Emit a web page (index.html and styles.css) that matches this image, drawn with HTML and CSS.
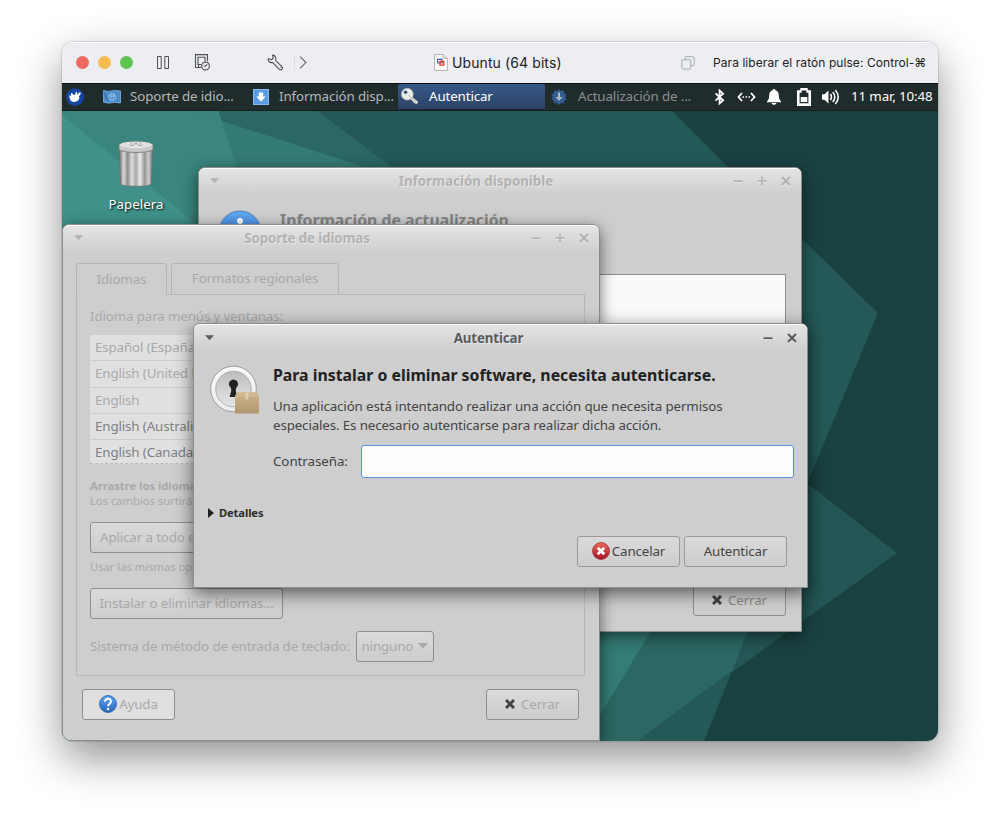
FILE: index.html
```html
<!DOCTYPE html>
<html lang="es">
<head>
<meta charset="utf-8">
<title>Ubuntu (64 bits)</title>
<link rel="stylesheet" href="styles.css">
</head>
<body>
<svg class="defs" width="0" height="0" aria-hidden="true">
  <defs>
    <linearGradient id="blue" x2="0" y2="1"><stop offset="0" stop-color="#62aaf4"/><stop offset="1" stop-color="#2764b8"/></linearGradient>
    <linearGradient id="red" x2="0" y2="1"><stop offset="0" stop-color="#ec6a5c"/><stop offset="1" stop-color="#a31325"/></linearGradient>
    <linearGradient id="metal"><stop offset="0" stop-color="#777"/><stop offset=".13" stop-color="#d8d8d8"/><stop offset=".25" stop-color="#8c8c8e"/><stop offset=".37" stop-color="#ddd"/><stop offset=".5" stop-color="#a8a8aa"/><stop offset=".62" stop-color="#ececec"/><stop offset=".76" stop-color="#98989a"/><stop offset=".88" stop-color="#ccc"/><stop offset="1" stop-color="#777"/></linearGradient>
    <linearGradient id="ring" x2="0" y2="1"><stop offset="0" stop-color="#fafafa"/><stop offset="1" stop-color="#ececec"/></linearGradient>
    <linearGradient id="face" x2="0" y2="1"><stop offset="0" stop-color="#bdbdbf"/><stop offset="1" stop-color="#e6e6e6"/></linearGradient>
    <linearGradient id="box" x2="0" y2="1"><stop offset="0" stop-color="#cdb48b"/><stop offset="1" stop-color="#af9871"/></linearGradient>
    <symbol id="menu-arrow" viewBox="0 0 10 6"><path d="M0 0h10L5 5.500z" fill="currentColor"/></symbol>
    <symbol id="w-min" viewBox="0 0 10 10"><path d="M.5 5.200h9" stroke="currentColor" stroke-width="1.800"/></symbol>
    <symbol id="w-max" viewBox="0 0 10 10"><path d="M.3 5h9.400M5 .5v9" stroke="currentColor" stroke-width="1.700"/></symbol>
    <symbol id="w-close" viewBox="0 0 10 10"><path d="M1 1l8 8M9 1L1 9" stroke="currentColor" stroke-width="2.200"/></symbol>
    <symbol id="b-close" viewBox="0 0 10 10"><path d="M1 1l8 8M9 1L1 9" stroke="#444" stroke-width="3"/></symbol>
  </defs>
</svg>
<main class="vm">
  <header class="mac-bar">
    <i class="light light-red"></i><i class="light light-yellow"></i><i class="light light-green"></i>
    <svg class="i-pause" width="14" height="15" viewBox="0 0 14 15" fill="none" stroke="#4d4f53"><path d="M1.500 1.500h3.700v12H1.500zM8.800 1.500h3.700v12H8.800z"/></svg>
    <svg class="i-snap" width="17" height="17" viewBox="0 0 17 17" fill="none" stroke="#4d4f53" stroke-width="1.100"><path d="M7 13.500H1.500V.600h12V7M4.500 13.500V11M7 10.500H4V3.200h7V7"/><circle cx="11.500" cy="12" r="3.900"/><path d="M11.500 12l1.800-1.600M11.500 12H9.500"/></svg>
    <svg class="i-wrench" width="17" height="17" viewBox="0 0 17 17" fill="none" stroke="#4d4f53" stroke-width="1.100"><path d="M5.600 1.200l.600 3-1.600 1.500L1.300 4.800C.700 7 3 9.200 5.700 8.500l6.600 6.900c1.800 1.500 4.200-.800 2.600-2.700L8.700 6.600C9.600 3.500 7.800.900 5.600 1.200zM12.900 13.500h.600"/></svg>
    <i class="rule"></i>
    <svg class="i-chev" width="8" height="13" viewBox="0 0 8 13" fill="none" stroke="#66686c" stroke-width="1.100"><path d="M1 .700l6 5.800-6 5.800"/></svg>
    <div class="mac-title">
      <svg width="14" height="17" viewBox="0 0 14 17"><path d="M.600.500h8.600l4.200 4v12H.600z" fill="#fafafa" stroke="#b3b3b3"/><path d="M9 .500v4h4.400" fill="#ddd" stroke="#aaa" stroke-width=".700"/><path d="M3.600 5.400h4.400v3.600H3.600z" fill="none" stroke="#3c5da8" stroke-width="1.100"/><path d="M6 7.500h3.800v3.600H6z" fill="none" stroke="#e4382b" stroke-width="1.300"/></svg>
      <span>Ubuntu (64 bits)</span>
    </div>
    <svg class="i-copy" width="14" height="14" viewBox="0 0 14 14" fill="none" stroke="#a6a8ac"><rect x=".800" y="3.700" width="9" height="9.300" rx="1.300"/><path d="M4 3.500V1.800C4 1 4.300.700 5 .700h6.800c1 0 1.400.400 1.400 1.300v6.400c0 .900-.300 1.300-1.200 1.300h-2"/></svg>
    <span class="mac-hint">Para liberar el ratón pulse: Control-⌘</span>
  </header>

  <nav class="panel">
    <svg class="mouse" width="18" height="18" viewBox="0 0 18 18"><circle cx="9" cy="9" r="8.800" fill="#1546a6"/><path d="M3 7.500l2.200.3-.5-2.800 1.500.3L7.800 7l1.200-.3 1-3 1 .3.300 2.500 2.500-2.200 1.200.500-1.200 2.700-.8.800c1 2.500-.5 4.700-3 5.300-3 .8-5.300-.200-5.800-1.800z" fill="#fff"/></svg>
    <div class="task task-lang">
      <svg width="18" height="15" viewBox="0 0 18 15"><path d="M.500 1.500l5 1 6-1 6 .400v12l-6-.500-6 .800-5-1z" fill="#4b8cca" stroke="#7cb5e4" stroke-width=".800"/><path d="M9 4.500a3.700 3.500 0 1 0 .100 0zM5.500 7h7M8 5v6M10.500 5v6" fill="none" stroke="#a5cbec" stroke-opacity=".7"/><path d="M1 3l4 9" stroke="#2c649d"/></svg>
      <span>Soporte de idio...</span>
    </div>
    <div class="task task-info">
      <svg width="16" height="16" viewBox="0 0 16 16"><rect x=".500" y=".500" width="15" height="15" fill="#5c9de2" stroke="#86b9ee"/><path d="M5.800 3.500h4.400V7.500h2.500L8 12.700 3.300 7.500h2.500z" fill="#fff"/></svg>
      <span>Información disp...</span>
    </div>
    <div class="task task-auth active">
      <svg width="18" height="17" viewBox="0 0 18 17"><path d="M9.500 9.300l6.800 5.900" stroke="#deded8" stroke-width="3"/><path d="M12.500 14.500l2-2" stroke="#d8d8d2" stroke-width="2.500"/><circle cx="6.300" cy="6.200" r="5.900" fill="#ebebe6" stroke="#b8b8b0" stroke-width=".700"/><circle cx="4.600" cy="4.300" r="1.800" fill="#35537d"/><path d="M7 7l8 7" stroke="#b5b5ad" stroke-width=".800"/></svg>
      <span>Autenticar</span>
    </div>
    <div class="task task-update">
      <svg width="16" height="16" viewBox="0 0 16 16"><path d="M8 0l1.800 2.100L12.700 1.500l.400 2.800 2.600 1.100L14.200 8l1.500 2.600-2.600 1.100-.400 2.800-2.900-.600L8 16l-1.800-2.100-2.900.600-.400-2.800-2.600-1.100L1.800 8 .300 5.400l2.600-1.100.400-2.800 2.900.600z" fill="#315d91"/><path d="M7 3.500h2V8h2.500L8 12 4.500 8H7z" fill="#aebac1"/></svg>
      <span>Actualización de ...</span>
    </div>
    <div class="tray">
      <svg width="12" height="16" viewBox="0 0 12 16" fill="none" stroke="#fff" stroke-width="1.800"><path d="M1.500 4.300l7.600 7-3.500 3.200V1.500l3.500 3.200-7.600 7"/></svg>
      <svg width="19" height="10" viewBox="0 0 19 10" fill="none" stroke="#fff" stroke-width="1.800"><path d="M5 1L1.500 5 5 9M14 1l3.500 4L14 9"/><path d="M5.500 5h8" stroke-dasharray="1.500 1.500" stroke-width="1.500"/></svg>
      <svg width="14" height="16" viewBox="0 0 14 16" fill="#fff"><path d="M7 0c1 0 1.300.600 1.400 1.300C11 2 11.800 4.100 11.900 7c.100 3 .800 4.200 2.100 5.300v.900H0v-.900C1.300 11.200 2 10 2.100 7 2.200 4.100 3 2 5.600 1.300 5.700.600 6 0 7 0zM4.500 14h5c-.500 2.400-4.500 2.400-5 0z"/></svg>
      <svg class="battery" width="14" height="18" viewBox="0 0 14 18"><path d="M3.300 0h7.400v2.300H14V18H0V2.300h3.300z" fill="#fff"/><path d="M4.600 2.500h4.800v2.300h2v10.400h-8.800V4.800h2z" fill="#202929"/><path d="M3.700 9h6.600v5H3.700z" fill="#fff"/></svg>
      <svg width="18" height="16" viewBox="0 0 18 16"><path d="M0 5.300h2.500L6.500 1.500v13l-4-3.700H0z" fill="#fff"/><path d="M8.500 5q2 3 0 6M10.800 3q4 5 0 10M13.300 1q6 7 0 14" fill="none" stroke="#fff" stroke-width="1.500"/></svg>
    </div>
    <span class="clock">11 mar, 10:48</span>
  </nav>

  <section class="desktop">
    <svg class="wallpaper" viewBox="62 111 876 630" preserveAspectRatio="none">
      <rect x="62" y="110" width="876" height="631" fill="#1a4142"/>
      <path d="M62 110H671L727 166 878 313 808 482 704 741H62z" fill="#245957"/>
      <path d="M62 110H316L390 166 640 360V741H62z" fill="#2b6863"/>
      <path d="M62 110H188L361 166 700 280V550L585 741H62z" fill="#347b74"/>
      <path d="M62 110H218L300 360V741H62z" fill="#3a857e"/>
      <path d="M188 110H218L221 121z" fill="#3a857e"/>
      <path d="M62 115L210 235H62z" fill="#3f9189"/>
      <path d="M808 484L897 553 637 741H600V484z" fill="#235654"/>
      <path d="M600 600H760L732 671 637 741H560z" fill="#2b6863"/>
      <path d="M600 600H670L600 715z" fill="#347c75"/>
    </svg>

    <figure class="trash">
      <svg width="36" height="48" viewBox="0 0 36 48"><path d="M1.500 8h33l-1 36c-1 3-30 3-31 0z" fill="url(#metal)" stroke="#6d6d6d" stroke-width=".800"/><path d="M1 4.500C4 .500 32 .500 35 4.500v5c-4 4-30 4-34 0z" fill="#c9c9cb" stroke="#777" stroke-width=".800"/><ellipse cx="18" cy="4.900" rx="16" ry="3.500" fill="#e1e1e1"/><path d="M12.500 5.500L14 1.800h8l1.500 3.700h-3l-.500-1.800h-4l-.500 1.800z" fill="#eee" stroke="#888" stroke-width=".700"/></svg>
      <figcaption>Papelera</figcaption>
    </figure>

    <article class="win win-info">
      <div class="bar"><svg class="menu"><use href="#menu-arrow"/></svg><b>Información disponible</b><div class="ctl"><svg><use href="#w-min"/></svg><svg><use href="#w-max"/></svg><svg><use href="#w-close"/></svg></div></div>
      <div class="info-head">
        <svg width="44" height="44" viewBox="0 0 44 44"><circle cx="22" cy="22" r="21" fill="url(#blue)" stroke="#4a7fc0"/><circle cx="22" cy="11" r="3" fill="#fff"/><path d="M18 17h6v17h-4V20h-2z" fill="#fff"/></svg>
        <h2>Información de actualización</h2>
      </div>
      <div class="info-box"></div>
      <div class="info-foot"><button class="btn dim-2"><svg class="x"><use href="#b-close"/></svg>Cerrar</button></div>
    </article>

    <article class="win win-lang">
      <div class="bar"><svg class="menu"><use href="#menu-arrow"/></svg><b>Soporte de idiomas</b><div class="ctl"><svg><use href="#w-min"/></svg><svg><use href="#w-max"/></svg><svg><use href="#w-close"/></svg></div></div>
      <div class="tabs"><div class="tab current">Idiomas</div><div class="tab">Formatos regionales</div></div>
      <div class="page">
        <p class="list-label">Idioma para menús y ventanas:</p>
        <ul class="langs"><li>Español (España)</li><li>English (United K</li><li>English</li><li class="on">English (Australia</li><li class="on">English (Canada)</li></ul>
        <p class="note"><b>Arrastre los idiomas</b><br>Los cambios surtirán</p>
        <button class="btn btn-apply">Aplicar a todo el</button>
        <p class="note note-2">Usar las mismas opc</p>
        <button class="btn btn-install">Instalar o eliminar idiomas...</button>
        <div class="ime"><span>Sistema de método de entrada de teclado:</span><button class="btn combo">ninguno<svg width="10" height="6"><use href="#menu-arrow"/></svg></button></div>
      </div>
      <div class="lang-foot">
        <button class="btn help"><svg width="18" height="18" viewBox="0 0 18 18"><circle cx="9" cy="9" r="8.400" fill="url(#blue)" stroke="#2a65b2"/><path d="M6 6.800C6 2.700 12.200 3 12 6.600c-.100 2-2.900 2.300-2.900 4.600" fill="none" stroke="#fff" stroke-width="1.900"/><circle cx="9.100" cy="14" r="1.200" fill="#fff"/></svg>Ayuda</button>
        <button class="btn"><svg class="x"><use href="#b-close"/></svg>Cerrar</button>
      </div>
    </article>

    <article class="win win-auth">
      <div class="bar"><svg class="menu"><use href="#menu-arrow"/></svg><b>Autenticar</b><div class="ctl"><svg><use href="#w-min"/></svg><svg><use href="#w-close"/></svg></div></div>
      <div class="auth-body">
        <svg class="lock" width="50" height="50" viewBox="0 0 50 50"><circle cx="23.500" cy="24" r="22.800" fill="url(#ring)" stroke="#949494" stroke-width=".900"/><circle cx="23.500" cy="24" r="17.800" fill="url(#face)" stroke="#a4a4a4" stroke-width=".800"/><path d="M20.800 22.700a4.600 4.600 0 1 1 5.400 0l-.500 2.800 1.600 6.500h-7.600l1.600-6.500z" fill="#222"/><path d="M25 31l2-3.500H47l2 3.500v17.500H25z" fill="url(#box)"/><path d="M25 32l2-4.500H47l2 4.500z" fill="#d0b990"/><path d="M35.500 27.500h2.800v7h-2.800z" fill="#dfcfae"/></svg>
        <div class="auth-copy">
          <h2>Para instalar o eliminar software, necesita autenticarse.</h2>
          <p>Una aplicación está intentando realizar una acción que necesita permisos<br>especiales. Es necesario autenticarse para realizar dicha acción.</p>
          <label class="pwd"><span>Contraseña:</span><input type="password"></label>
        </div>
      </div>
      <div class="details"><svg width="6" height="10" viewBox="0 0 6 10"><path d="M0 0l6 5-6 5z" fill="#222"/></svg>Detalles</div>
      <div class="auth-foot">
        <button class="btn cancel"><svg width="18" height="18" viewBox="0 0 18 18"><circle cx="9" cy="9" r="8.500" fill="url(#red)" stroke="#9c2b33" stroke-width=".700"/><path d="M5.700 5.700l6.600 6.600M12.300 5.700l-6.600 6.600" stroke="#fff" stroke-width="2.800"/></svg>Cancelar</button>
        <button class="btn ok">Autenticar</button>
      </div>
    </article>
  </section>
</main>
</body>
</html>
```
FILE: styles.css
```css
* { box-sizing: border-box; }
body { margin: 0; height: 822px; background: #fff; padding: 42px 62px 0; overflow: hidden; font: 13.33px/18px "Noto Sans", sans-serif; letter-spacing: -.125px; }
svg { display: block; flex: none; overflow: visible; }
.defs { position: absolute; }
p, h2, ul, figure { margin: 0; padding: 0; }
.vm { width: 876px; height: 699px; border-radius: 11px; overflow: hidden; display: flex; flex-direction: column; box-shadow: 0 0 1px 1px rgba(0,0,0,.12), 0 17px 44px rgba(0,0,0,.43); }

/* Host window toolbar */
.mac-bar { height: 42px; flex: none; display: flex; align-items: center; padding: 0 11px 1px 14px; background: #eceef2; border-top: 1px solid #fff; border-bottom: 1px solid #111; font-family: Inter, sans-serif; color: #222; }
.light { width: 13px; height: 13px; border-radius: 50%; margin-right: 9px; }
.light-red { background: #ee6a5f; }
.light-yellow { background: #f5bd4f; }
.light-green { background: #61c354; }
.i-pause { margin-left: 14px; }
.i-snap { margin-left: 24px; }
.i-wrench { margin-left: 56px; }
.rule { width: 1px; height: 16px; background: #dcdee2; margin-left: 10px; }
.i-chev { margin-left: 4px; }
.mac-title { display: flex; align-items: center; margin-left: 127px; font-size: 14px; gap: 4px; width: 130px; white-space: nowrap; letter-spacing: .1px; }
.i-copy { margin-left: 117px; }
.mac-hint { margin-left: 18px; font-size: 12px; white-space: nowrap; letter-spacing: .07px; }

/* Xfce panel */
.panel { height: 27px; flex: none; display: flex; align-items: center; background: #202b2b; border-bottom: 1px solid #142020; color: #b4b8b8; white-space: nowrap; padding-bottom: 1px; }
.mouse { margin-left: 4px; }
.task { display: flex; align-items: center; height: 25px; }
.task span, .clock { padding-bottom: 1px; }
.task-lang { margin-left: 19px; width: 150px; gap: 9px; }
.task-info { width: 145px; gap: 10px; }
.task-auth { width: 147px; gap: 10px; padding-left: 3px; }
.active { background: linear-gradient(#36588a, #2c4365); color: #fff; border-radius: 2px; }
.task-update { padding-left: 6px; gap: 11px; width: 169px; color: #8b9090; }
.tray { display: flex; align-items: center; width: 137px; gap: 11px; }
.battery { margin-left: 5px; }
.clock { color: #fff; }

/* Desktop */
.desktop { position: relative; flex: 1; overflow: hidden; }
.wallpaper { position: absolute; inset: 0; width: 100%; height: 100%; }
.trash { position: absolute; left: 34px; top: 29px; width: 80px; display: flex; flex-direction: column; align-items: center; gap: 7px; color: #fff; text-shadow: 1px 1px 2px #000; letter-spacing: 0; }

.win { position: absolute; background: #cecece; border: 1px solid #8d8d8d; border-radius: 7px 7px 0 0; box-shadow: 0 4px 15px rgba(0,0,0,.55); color: #a9a9a9; white-space: nowrap; display: flex; flex-direction: column; }
.bar { height: 27px; flex: none; display: flex; align-items: center; padding: 0 10px 2px 11px; border-radius: 6px 6px 0 0; border-top: 1px solid #fff; background: linear-gradient(#e4e4e4, #cecece); color: #b3b3b3; text-shadow: 1px 1px 0 #e6e6e6; }
.bar b { flex: 1; text-align: center; font-size: 13.33px; }
.menu { width: 9px; height: 6px; }
.ctl { display: flex; gap: 14px; }
.ctl svg { width: 10px; height: 10px; filter: drop-shadow(0 1px 0 #e8e8e8); }
.btn { height: 31px; padding: 0 0 2px; margin: 0; border: 1px solid #8f8f8f; border-radius: 3px; background: linear-gradient(#dadada, #cdcdcd); font: inherit; letter-spacing: inherit; color: #a9a9a9; display: flex; align-items: center; justify-content: center; white-space: nowrap; width: 93px; }
.btn .x { width: 10px; height: 10px; margin-right: 6px; }

.win-info { left: 136px; top: 56px; width: 604px; height: 465px; }
.win-info .bar b { letter-spacing: 0; }
.info-head { display: flex; padding: 15px 19px; gap: 18px; height: 60px; }
.info-head h2 { font-size: 15.800px; line-height: 20px; color: #858585; letter-spacing: 0; }
.info-box { margin: 19px 15px 0; height: 271px; background: #fafafa; border: 1px solid #8d8d8d; }
.info-foot { display: flex; justify-content: flex-end; padding: 40px 15px 0; }
.dim-2 { color: #8c8c8c; }

.win-lang { left: 0; top: 113px; width: 538px; height: 517px; }
.tabs { display: flex; align-items: flex-end; gap: 4px; margin: 11px 14px 0 13px; height: 32px; }
.tab { height: 32px; width: 168px; padding-bottom: 4px; border: 1px solid #b5b5b5; border-bottom: 0; border-radius: 3px 3px 0 0; display: flex; align-items: center; justify-content: center; position: relative; }
.tab.current { width: 91px; padding: 0 0 2px; background: #cecece; z-index: 1; }
.page { margin: -1px 14px 0 13px; height: 382px; border: 1px solid #b8b8b8; padding: 12px 0 0 13px; }
.langs { list-style: none; margin-top: 10px; width: 300px; height: 129px; background: #e0e0e0; border-bottom: 1px dashed #bbb; }
.langs li { height: 26.300px; padding: 3px 0 0 5px; border-bottom: 1px solid #ccc; }
.langs li:last-child { border: 0; }
.langs .on { color: #808080; }
.note { font-size: 11.200px; line-height: 15px; margin-top: 14px; letter-spacing: 0; }
.btn-apply { width: 193px; justify-content: flex-start; padding-left: 9px; margin-top: 14px; }
.note-2 { margin-top: 6px; }
.btn-install { width: 193px; margin-top: 14px; }
.ime { display: flex; align-items: center; gap: 6px; margin-top: 12px; }
.ime span { padding-bottom: 2px; }
.combo { width: 78px; gap: 5px; }
.lang-foot { display: flex; justify-content: space-between; padding: 13px 20px 0 19px; }
.help { gap: 2px; background: #dfdfdf; }

.win-auth { left: 131px; top: 212px; width: 615px; height: 265px; color: #444; box-shadow: 0 5px 18px rgba(0,0,0,.6); }
.win-auth .bar { color: #5c5c5c; padding-bottom: 0; }
.auth-body { display: flex; padding: 14px 13px 0 16px; gap: 13px; }
.auth-copy { flex: 1; }
.auth-copy h2 { font-size: 15.850px; line-height: 20px; color: #222; letter-spacing: 0; }
.auth-copy p { line-height: 18.700px; margin-top: 12px; }
.pwd { display: flex; align-items: center; justify-content: space-between; margin-top: 11px; }
.pwd span { padding-bottom: 2px; letter-spacing: -.05px; }
.pwd input { width: 433px; height: 33px; border: 1px solid #5a8fd8; border-radius: 3px; background: #fdfdfd; padding: 0; }
.details { display: flex; align-items: center; gap: 5px; font-weight: 700; font-size: 11.200px; color: #2c2c2c; margin: 26px 0 0 14px; }
.auth-foot { display: flex; justify-content: flex-end; gap: 4px; padding: 14px 20px 0; }
.auth-foot .btn { width: 103px; color: #444; border-color: #9a9a9a; }
.cancel { gap: 2px; }
```
